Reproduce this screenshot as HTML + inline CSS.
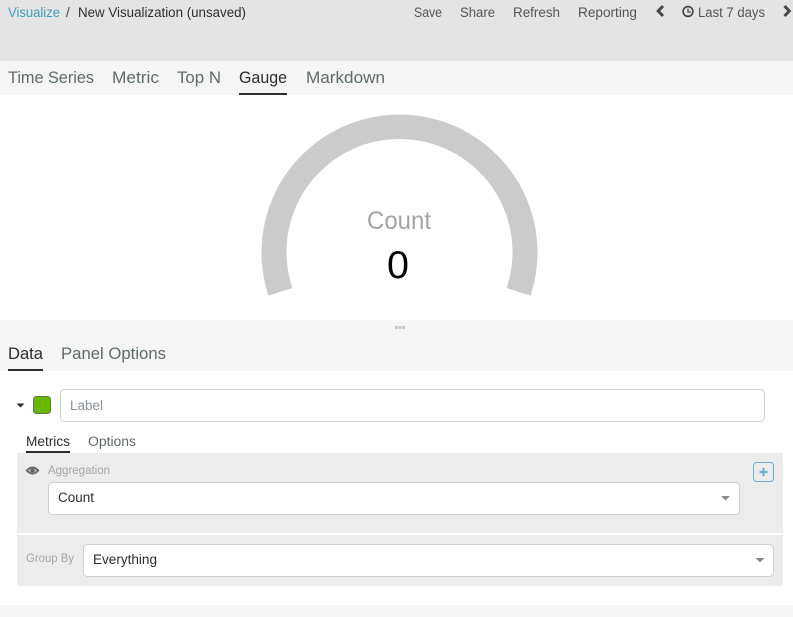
<!DOCTYPE html>
<html>
<head>
<meta charset="utf-8">
<style>
html,body{margin:0;padding:0;background:#fff;}
svg{display:block;}
text{font-family:"Liberation Sans",sans-serif;}
</style>
</head>
<body>
<svg width="793" height="617" viewBox="0 0 793 617" xmlns="http://www.w3.org/2000/svg">
<rect width="793" height="617" fill="#fff"/>
<rect width="793" height="61" fill="#e4e4e4"/>
<rect y="61" width="793" height="34" fill="#f5f5f5"/>
<rect y="320" width="793" height="51" fill="#f5f5f5"/>
<rect y="605" width="793" height="12" fill="#f5f5f5"/>

<g font-size="13.5" fill="#555">
<text x="8" y="17" textLength="52" lengthAdjust="spacingAndGlyphs" fill="#3f9fbf">Visualize</text>
<text x="66" y="17" fill="#444">/</text>
<text x="78" y="17" textLength="168" lengthAdjust="spacingAndGlyphs" fill="#2d2d2d">New Visualization (unsaved)</text>
<text x="414" y="17" textLength="28" lengthAdjust="spacingAndGlyphs">Save</text>
<text x="460" y="17" textLength="35" lengthAdjust="spacingAndGlyphs">Share</text>
<text x="513" y="17" textLength="47" lengthAdjust="spacingAndGlyphs">Refresh</text>
<text x="578" y="17" textLength="59" lengthAdjust="spacingAndGlyphs">Reporting</text>
<text x="698" y="17" textLength="67" lengthAdjust="spacingAndGlyphs">Last 7 days</text>
</g>
<path d="M663 6 L658.2 11 L663 16" fill="none" stroke="#4a4a4a" stroke-width="3"/>
<path d="M784.5 6 L789.3 11 L784.5 16" fill="none" stroke="#4a4a4a" stroke-width="3"/>
<circle cx="688" cy="11.5" r="4.9" fill="none" stroke="#4a4a4a" stroke-width="1.7"/>
<path d="M688 8.5 V12 H691" fill="none" stroke="#4a4a4a" stroke-width="1.3"/>

<g font-size="16.5" fill="#5f6b6b">
<text x="8" y="83" textLength="86" lengthAdjust="spacingAndGlyphs">Time Series</text>
<text x="112" y="83" textLength="47" lengthAdjust="spacingAndGlyphs">Metric</text>
<text x="177" y="83" textLength="44" lengthAdjust="spacingAndGlyphs">Top N</text>
<text x="239" y="83" textLength="48" lengthAdjust="spacingAndGlyphs" fill="#2d2d2d">Gauge</text>
<text x="306" y="83" textLength="79" lengthAdjust="spacingAndGlyphs">Markdown</text>
</g>
<rect x="239" y="93" width="48" height="2" fill="#2d2d2d"/>

<path d="M268.4 295.6 A138 138 0 1 1 530.6 295.6 L506.6 288 A113 113 0 1 0 292.4 288 Z" fill="#cbcbcb"/>
<text x="367" y="229" font-size="25" textLength="64" lengthAdjust="spacingAndGlyphs" fill="#a3a3a3">Count</text>
<text x="387" y="278" font-size="39" textLength="22" lengthAdjust="spacingAndGlyphs" fill="#000">0</text>

<rect x="395" y="326" width="2.6" height="3" fill="#c4c4c4"/>
<rect x="398.7" y="326" width="2.6" height="3" fill="#c4c4c4"/>
<rect x="402.4" y="326" width="2.6" height="3" fill="#c4c4c4"/>

<text x="8" y="359" font-size="16.5" textLength="35" lengthAdjust="spacingAndGlyphs" fill="#2d2d2d">Data</text>
<rect x="8" y="369" width="35" height="2" fill="#2d2d2d"/>
<text x="61" y="359" font-size="16.5" textLength="105" lengthAdjust="spacingAndGlyphs" fill="#5f6b6b">Panel Options</text>

<path d="M16.5 403.5 H24.5 L20.5 407.5 Z" fill="#2d2d2d"/>
<rect x="33.5" y="396.5" width="17" height="17" rx="3" fill="#68b800" stroke="#5f7a45"/>
<rect x="60.5" y="389.5" width="704" height="32" rx="4" fill="#fff" stroke="#cfcfcf"/>
<text x="70" y="410" font-size="13.5" textLength="33" lengthAdjust="spacingAndGlyphs" fill="#8a8f99">Label</text>

<text x="26" y="446" font-size="13.5" textLength="44" lengthAdjust="spacingAndGlyphs" fill="#2d2d2d">Metrics</text>
<rect x="26" y="451" width="44" height="2" fill="#2d2d2d"/>
<text x="88" y="446" font-size="13.5" textLength="48" lengthAdjust="spacingAndGlyphs" fill="#5f6b6b">Options</text>

<rect x="17" y="453" width="766" height="80" fill="#ececec"/>
<rect x="17" y="535" width="766" height="51" fill="#ececec"/>

<path d="M25.5 470.5 Q32.5 462.5 39.5 470.5 Q32.5 478.5 25.5 470.5 Z" fill="#666"/>
<path d="M28 470.5 Q32.5 466 37 470.5 Q32.5 475 28 470.5 Z" fill="#bdbdbd"/>
<circle cx="32.5" cy="470.5" r="2.2" fill="#666"/>
<text x="48" y="474" font-size="11.5" textLength="62" lengthAdjust="spacingAndGlyphs" fill="#a5a5a5">Aggregation</text>

<rect x="48.5" y="482.5" width="691" height="32" rx="4" fill="#fff" stroke="#cfcfcf"/>
<text x="58" y="502" font-size="13.5" textLength="36" lengthAdjust="spacingAndGlyphs" fill="#2d2d2d">Count</text>
<path d="M721 496 H730 L725.5 500.5 Z" fill="#8a8a8a"/>

<rect x="753.5" y="462.5" width="20" height="19" rx="3" fill="#ececec" stroke="#6eb0c8"/>
<path d="M763.5 468 V476 M759.5 472 H767.5" fill="none" stroke="#6eb0c8" stroke-width="2.2"/>

<text x="26" y="562" font-size="11.5" textLength="48" lengthAdjust="spacingAndGlyphs" fill="#a5a5a5">Group By</text>
<rect x="83.5" y="544.5" width="690" height="32" rx="4" fill="#fff" stroke="#cfcfcf"/>
<text x="93" y="564" font-size="13.5" textLength="64" lengthAdjust="spacingAndGlyphs" fill="#2d2d2d">Everything</text>
<path d="M755.5 558 H764.5 L760 562.5 Z" fill="#8a8a8a"/>
</svg>
</body>
</html>
